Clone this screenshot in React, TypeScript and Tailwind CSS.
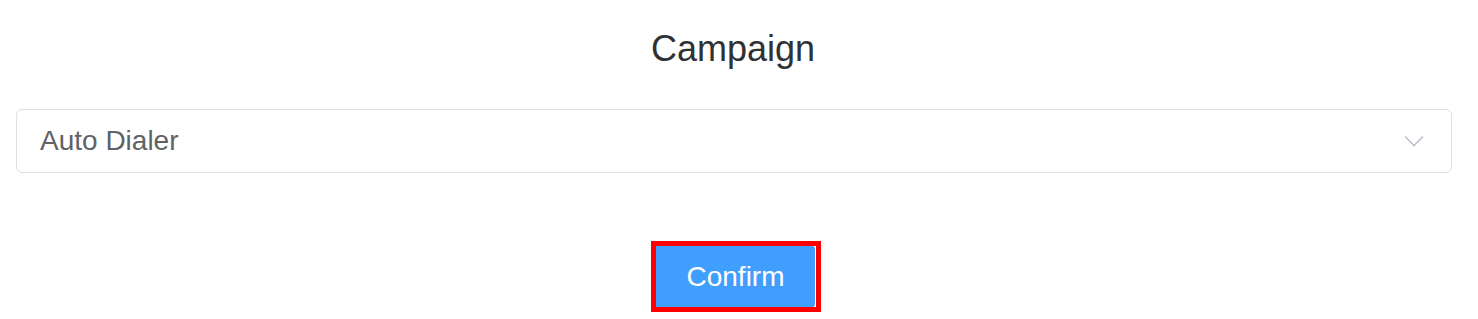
import React from "react";

export default function App() {
  return (
    <div
      className="w-[1478px] h-[319px] bg-white pl-4 pr-[26px] flex flex-col"
      style={{ fontFamily: '"Liberation Sans", Arial, sans-serif' }}
    >
      <div className="pt-[29px] h-[109px] flex justify-center">
        <h1 className="text-[36px] leading-[40px] text-[#303133] font-normal mr-[2px]">Campaign</h1>
      </div>
      <div className="h-[64px] border border-[#dcdfe6] rounded-[6px] flex items-center justify-between pl-[23px] pr-[27px]">
        <span className="text-[28px] text-[#606266]">Auto Dialer</span>
        <svg width="20" height="12" viewBox="0 0 20 12" fill="none">
          <path d="M1 1.5 L10 10.5 L19 1.5" stroke="#c0c4cc" strokeWidth="1.6" />
        </svg>
      </div>
      <div className="pt-[68px] flex justify-center">
        <div className="border-[5px] border-[#ff0000] ml-[4px] pr-[1px] bg-white">
          <button className="w-[159px] h-[61px] bg-[#409eff] text-white text-[28px] rounded-r-[3px] flex items-center justify-center">
            Confirm
          </button>
        </div>
      </div>
    </div>
  );
}
